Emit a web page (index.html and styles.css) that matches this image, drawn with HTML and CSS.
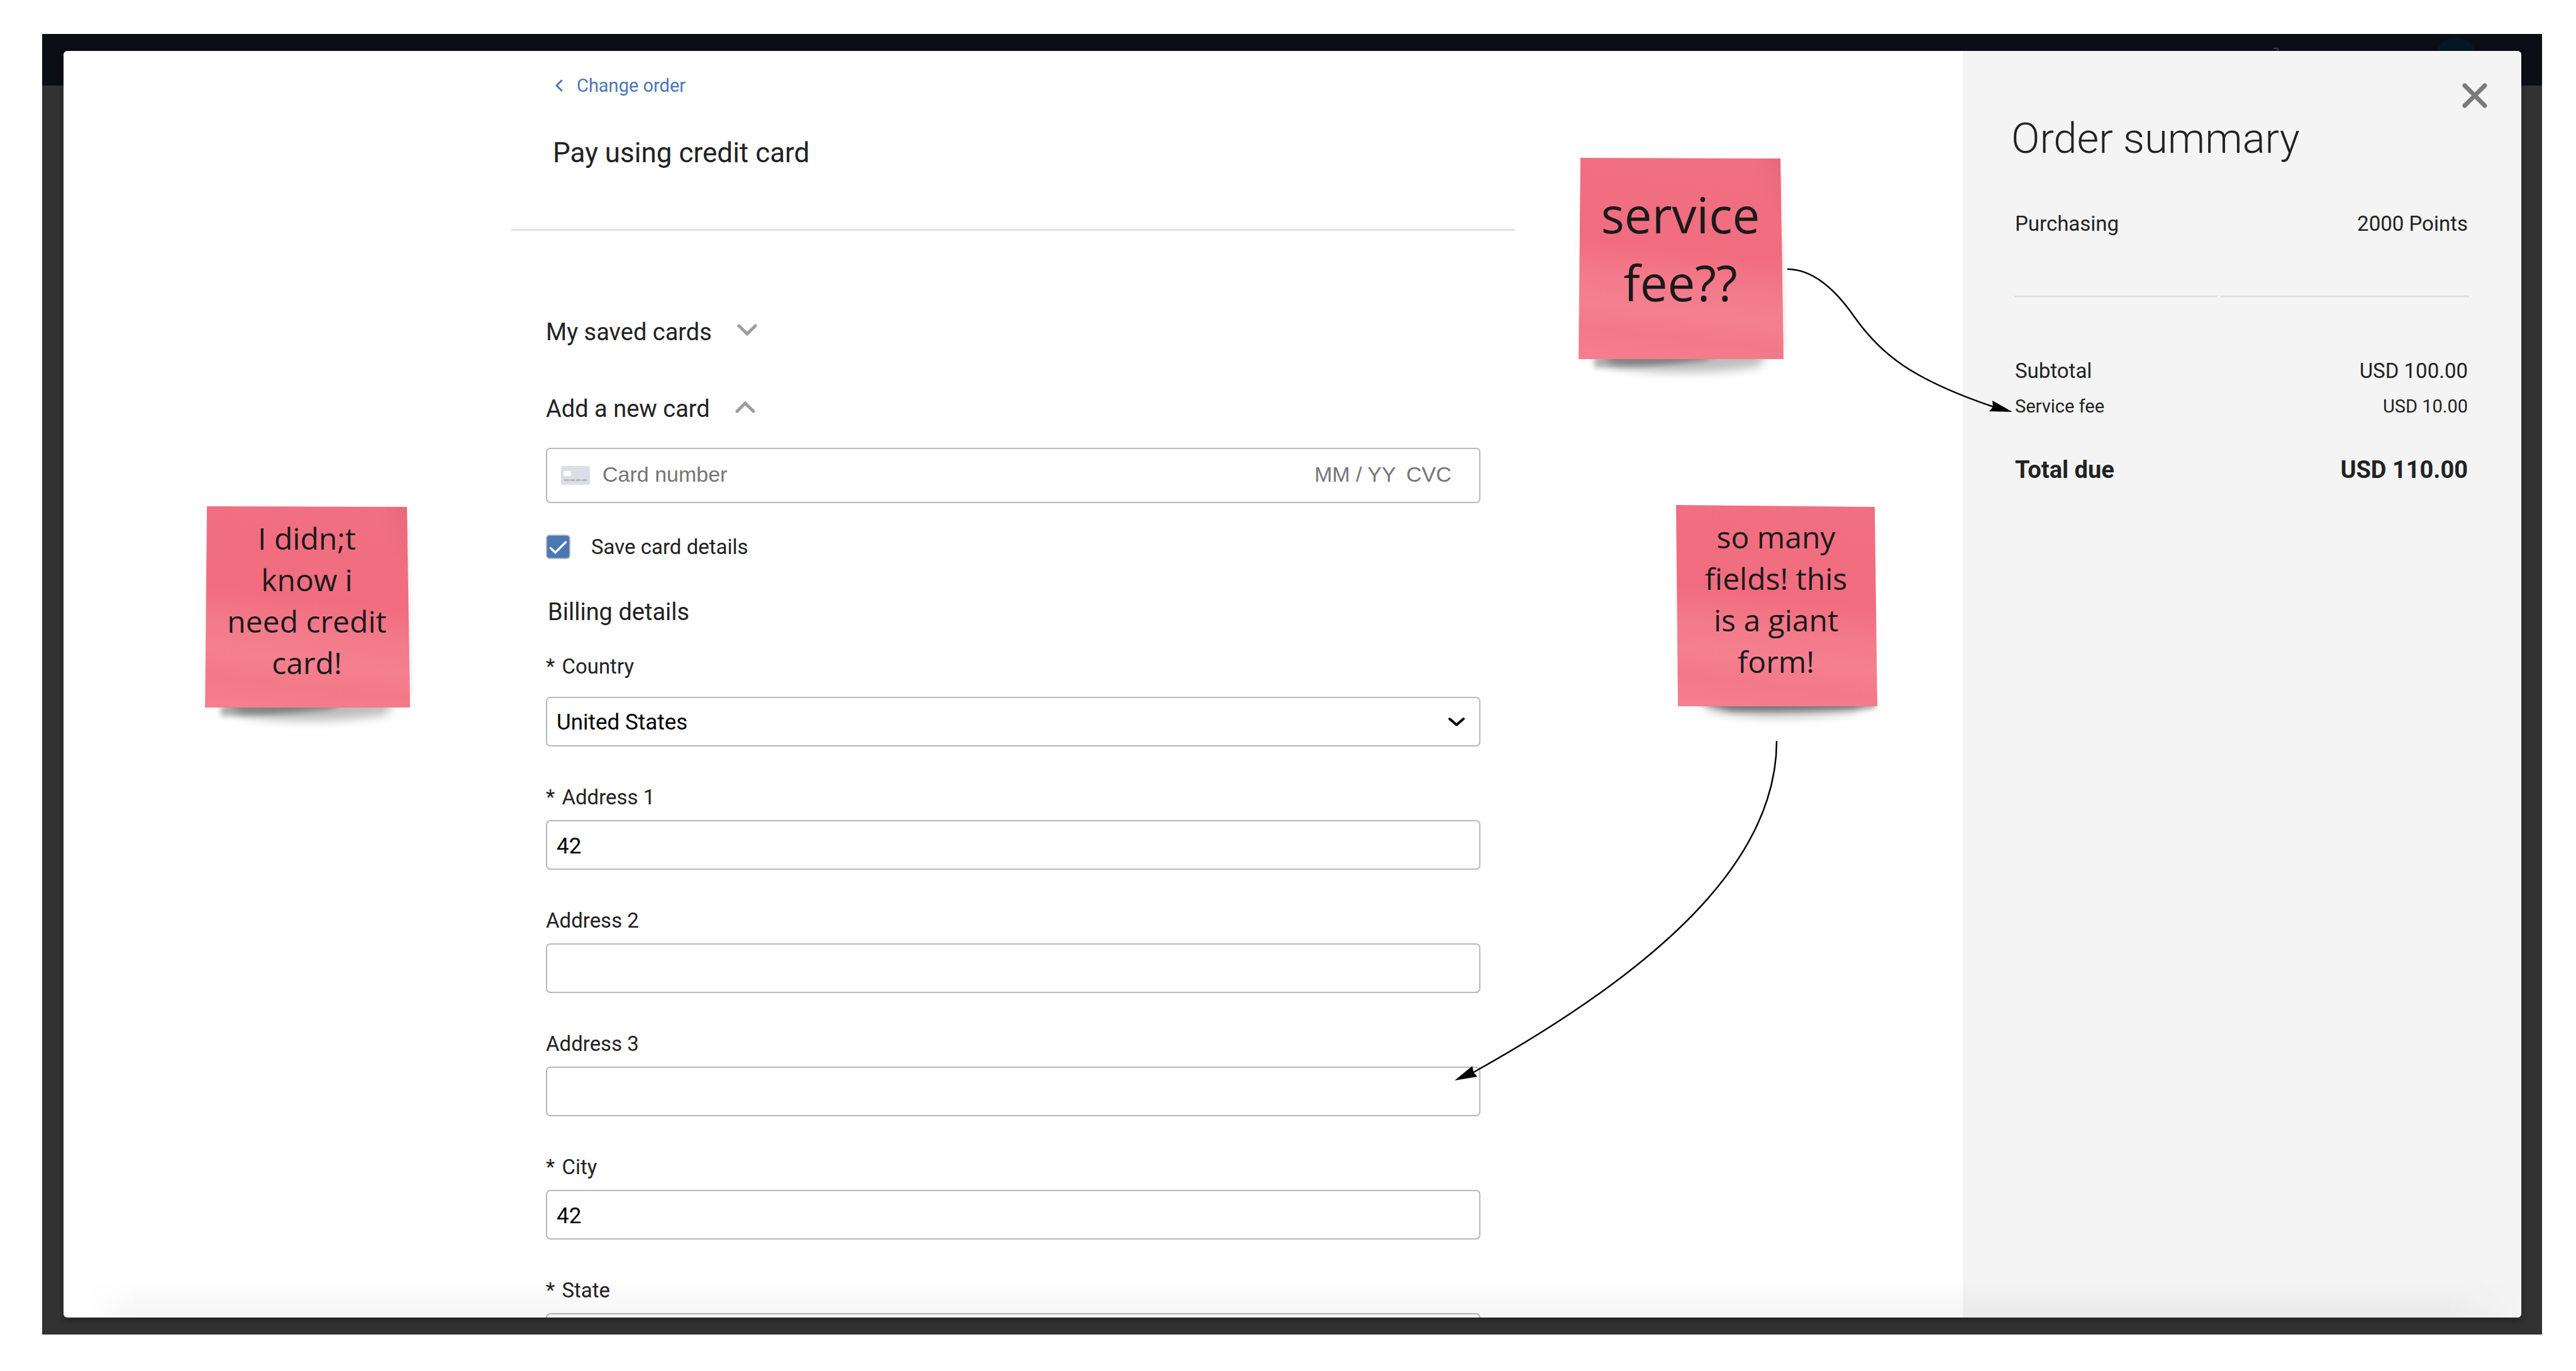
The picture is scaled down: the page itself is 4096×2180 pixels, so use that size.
FILE: index.html
```html
<!DOCTYPE html>
<html lang="en">
<head>
<meta charset="utf-8">
<meta name="viewport" content="width=device-width, initial-scale=1">
<title>Pay using credit card</title>
<link rel="stylesheet" href="styles.css">
</head>
<body>
<div class="frame">
  <header class="navbar">
    <svg class="navbar-mark" viewBox="0 0 8 20" aria-hidden="true"><path d="M0 1H7V8" fill="none" stroke="#3a3b3f" stroke-width="2"/></svg>
    <span class="avatar"></span>
  </header>

  <div class="dialog" role="dialog" aria-labelledby="pay-title">
    <main class="payment">
      <div class="payment-header">
        <a class="back-link" href="#order">
          <svg class="back-icon" viewBox="0 0 18 24" aria-hidden="true"><path d="M14 4L6 12L14 20" fill="none" stroke="#4a77b5" stroke-width="3" stroke-linecap="round" stroke-linejoin="round"/></svg>
          Change order
        </a>
        <h1 class="payment-title" id="pay-title">Pay using credit card</h1>
      </div>

      <form class="payment-form">
        <button class="toggle" type="button" aria-expanded="false">
          My saved cards
          <svg class="toggle-icon" viewBox="0 0 32 20" aria-hidden="true"><path d="M3 3L16 16L29 3" fill="none" stroke="#9c9c9c" stroke-width="5" stroke-linecap="round"/></svg>
        </button>
        <button class="toggle" type="button" aria-expanded="true">
          Add a new card
          <svg class="toggle-icon" viewBox="0 0 32 20" aria-hidden="true"><path d="M3 17L16 4L29 17" fill="none" stroke="#9c9c9c" stroke-width="5" stroke-linecap="round"/></svg>
        </button>

        <div class="card-box">
          <svg class="card-icon" viewBox="0 0 46 30" aria-hidden="true">
            <rect width="46" height="30" rx="4" fill="#dbdee6"/>
            <rect x="4" y="8" width="12" height="8" rx="1" fill="#fff"/>
            <path d="M6 22.500H11.500M15.500 22.500H21M25 22.500H30.500M34.500 22.500H40" stroke="#b4b8c5" stroke-width="3" stroke-linecap="round"/>
          </svg>
          <input class="card-input card-number" type="text" aria-label="Card number" placeholder="Card number">
          <input class="card-input card-expiry" type="text" aria-label="Expiry date" placeholder="MM / YY">
          <input class="card-input card-cvc" type="text" aria-label="CVC" placeholder="CVC">
        </div>

        <div class="save-row">
          <span class="checkbox">
            <input class="checkbox-input" type="checkbox" id="save-card" checked>
            <svg class="checkbox-mark" viewBox="0 0 39 39" aria-hidden="true"><path d="M7.500 21.500L15 28.500L31.500 12" fill="none" stroke="#fff" stroke-width="3.500" stroke-linecap="round"/></svg>
          </span>
          <label for="save-card">Save card details</label>
        </div>

        <h2 class="section-title">Billing details</h2>

        <div class="field field-country">
          <label class="field-label" for="country"><span class="required">*</span> Country</label>
          <div class="select-wrap">
            <select class="control" id="country"><option>United States</option></select>
            <svg class="select-icon" viewBox="0 0 28 18" aria-hidden="true"><path d="M3 4L14 13.500L25 4" fill="none" stroke="#000" stroke-width="4" stroke-linecap="round" stroke-linejoin="round"/></svg>
          </div>
        </div>
        <div class="field">
          <label class="field-label" for="address1"><span class="required">*</span> Address 1</label>
          <input class="control" type="text" id="address1" value="42">
        </div>
        <div class="field">
          <label class="field-label" for="address2">Address 2</label>
          <input class="control" type="text" id="address2">
        </div>
        <div class="field">
          <label class="field-label" for="address3">Address 3</label>
          <input class="control" type="text" id="address3">
        </div>
        <div class="field">
          <label class="field-label" for="city"><span class="required">*</span> City</label>
          <input class="control" type="text" id="city" value="42">
        </div>
        <div class="field">
          <label class="field-label" for="state"><span class="required">*</span> State</label>
          <input class="control" type="text" id="state">
        </div>
      </form>
    </main>

    <aside class="summary">
      <button class="close" type="button" aria-label="Close">
        <svg class="close-icon" viewBox="0 0 40 40" aria-hidden="true"><path d="M4 4L36 36M36 4L4 36" stroke="#7b7b7b" stroke-width="7" stroke-linecap="round"/></svg>
      </button>
      <h2 class="summary-title">Order summary</h2>
      <table class="totals">
        <tbody>
          <tr class="row-item"><th scope="row">Purchasing</th><td>2000 Points</td></tr>
          <tr class="row-subtotal"><th scope="row">Subtotal</th><td>USD 100.00</td></tr>
          <tr class="row-fee"><th scope="row">Service fee</th><td>USD 10.00</td></tr>
          <tr class="row-total"><th scope="row">Total due</th><td>USD 110.00</td></tr>
        </tbody>
      </table>
    </aside>
  </div>
</div>

<!-- Notes and arrows pinned on top of the screen -->
<svg class="arrows" aria-hidden="true">
  <g fill="none" stroke="#000" stroke-width="2.500">
    <path d="M2842 428C2885 428 2920 463 2948 503C2990 563 3040 603 3170 647"/>
    <path d="M2825 1178C2825 1340 2693 1510 2343 1705"/>
  </g>
  <path d="M3200 655L3168 637L3169 647L3163 654Z"/>
  <path d="M2313 1718L2341 1695L2343 1705L2349 1712Z"/>
</svg>

<div class="note note-fee">
  <svg class="note-paper" viewBox="0 0 326 320" aria-hidden="true">
    <defs>
      <linearGradient id="paper" x1="0.120" y1="0" x2="0" y2="1">
        <stop offset="0" stop-color="#f16f82"/>
        <stop offset="0.400" stop-color="#f16c7f"/>
        <stop offset="0.580" stop-color="#f37b8b"/>
        <stop offset="0.720" stop-color="#f47f8f"/>
        <stop offset="0.840" stop-color="#f37988"/>
        <stop offset="1" stop-color="#f47f90"/>
      </linearGradient>
      <linearGradient id="fold" x1="1" y1="0" x2="0.200" y2="0.500">
        <stop offset="0" stop-color="#e5677b"/>
        <stop offset="1" stop-color="#f06c7f" stop-opacity="0"/>
      </linearGradient>
      <filter id="soft" x="-20%" y="-100%" width="140%" height="300%"><feGaussianBlur stdDeviation="8"/></filter>
      <filter id="tight" x="-20%" y="-100%" width="140%" height="300%"><feGaussianBlur stdDeviation="4"/></filter>
    </defs>
    <path d="M34 300H308L286 332Q160 350 54 332Z" fill="#000" opacity="0.260" filter="url(#soft)"/>
    <path d="M25 300H250L200 322Q110 334 25 334Z" fill="#000" opacity="0.300" filter="url(#tight)"/>
    <path d="M312 20L322 30L328 300L312 316Z" fill="#000" opacity="0.100" filter="url(#tight)"/>
    <path d="M3 0L321 1L326 320L0 320Z" fill="url(#paper)"/>
    <path d="M321 1L322 92L268 50L288 1Z" fill="url(#fold)"/>
  </svg>
  <p class="note-text">service<br>fee??</p>
</div>

<div class="note note-know">
  <svg class="note-paper" viewBox="0 0 326 320" aria-hidden="true">
    <path d="M34 300H308L286 332Q160 350 54 332Z" fill="#000" opacity="0.260" filter="url(#soft)"/>
    <path d="M25 300H250L200 322Q110 334 25 334Z" fill="#000" opacity="0.300" filter="url(#tight)"/>
    <path d="M312 20L322 30L328 300L312 316Z" fill="#000" opacity="0.100" filter="url(#tight)"/>
    <path d="M3 0L321 1L326 320L0 320Z" fill="url(#paper)"/>
    <path d="M321 1L322 92L268 50L288 1Z" fill="url(#fold)"/>
  </svg>
  <p class="note-text">I didn;t<br>know i<br>need credit<br>card!</p>
</div>

<div class="note note-form">
  <svg class="note-paper" viewBox="0 0 326 320" aria-hidden="true">
    <path d="M30 300H312L290 328Q160 346 60 328Z" fill="#000" opacity="0.260" filter="url(#soft)"/>
    <path d="M20 310H322L318 324Q150 330 90 328Z" fill="#000" opacity="0.360" filter="url(#tight)"/>
    <path d="M3 0L319 3L323 320L6 320Z" fill="url(#paper)"/>
  </svg>
  <p class="note-text">so many<br>fields! this<br>is a giant<br>form!</p>
</div>
</body>
</html>
```
FILE: styles.css
```css
* {
  box-sizing: border-box;
}

body {
  position: relative;
  display: flex;
  height: 100vh;
  margin: 0;
  padding: 54px 54px 58px 67px;
  overflow: hidden;
  background: #fff;
  color: #222;
  font-family: Roboto, "Liberation Sans", sans-serif;
  font-size: 33px;
  line-height: 40px;
}

h1, h2, p {
  margin: 0;
  font-weight: 400;
}

svg {
  display: block;
  flex: none;
}

button, input, select {
  margin: 0;
  font: inherit;
  color: inherit;
}

/* Page behind the dialog */
.frame {
  display: grid;
  flex: 1;
  min-height: 0;
  grid-template: minmax(0, 1fr) / minmax(0, 1fr);
  background: #323232;
}

.navbar {
  display: flex;
  grid-area: 1 / 1;
  align-self: start;
  justify-content: flex-end;
  gap: 249px;
  height: 82px;
  padding: 5px 104px 0 0;
  background: #0b0e15;
}

.navbar-mark {
  width: 8px;
  height: 20px;
  margin-top: 17px;
}

.avatar {
  width: 66px;
  height: 66px;
  border-radius: 50%;
  background: #051627;
}

/* Dialog */
.dialog {
  position: relative;
  display: flex;
  grid-area: 1 / 1;
  margin: 27px 33px 27px 34px;
  overflow: hidden;
  border-radius: 6px;
  background: #fff;
  box-shadow: 0 6px 12px rgba(0, 0, 0, 0.3);
}

.dialog::after {
  position: absolute;
  right: 0;
  bottom: 0;
  left: 0;
  height: 64px;
  background: linear-gradient(transparent, rgba(0, 0, 0, 0.04));
  -webkit-mask-image: linear-gradient(90deg, transparent 30px, #000 120px, #000 calc(100% - 120px), transparent);
  mask-image: linear-gradient(90deg, transparent 30px, #000 120px, #000 calc(100% - 120px), transparent);
  content: "";
  pointer-events: none;
}

.payment {
  flex: 1;
  padding-top: 35px;
}

.payment-header,
.payment-form {
  max-width: 1596px;
  margin: 0 auto;
}

.payment-header {
  display: flex;
  flex-direction: column;
  align-items: flex-start;
  padding: 0 66px 93px;
  border-bottom: 3px solid #e2e2e2;
}

.back-link {
  display: flex;
  align-items: center;
  gap: 20px;
  color: #4a77b5;
  font-size: 29px;
  text-decoration: none;
}

.back-icon {
  width: 18px;
  height: 24px;
}

.payment-title {
  margin-top: 59px;
  font-size: 44px;
  line-height: 56px;
}

.payment-form {
  padding: 137px 55px 0;
}

.toggle {
  display: flex;
  align-items: center;
  gap: 40px;
  margin-bottom: 74px;
  padding: 0;
  border: 0;
  background: none;
  font-size: 38px;
  line-height: 48px;
}

.toggle + .card-box {
  margin-top: -36px;
}

.toggle-icon {
  width: 32px;
  height: 20px;
  margin-bottom: 6px;
}

.card-box {
  display: flex;
  align-items: center;
  height: 88px;
  padding: 0 40px 0 22px;
  border: 2px solid #b8b8b8;
  border-radius: 7px;
}

.card-icon {
  width: 46px;
  height: 30px;
  margin-right: 20px;
}

.card-input {
  height: 44px;
  padding: 0 0 4px;
  border: 0;
  outline: 0;
  background: none;
  font-family: "Liberation Sans", sans-serif;
  font-size: 34px;
}

.card-input::placeholder {
  color: #757575;
  opacity: 1;
}

.card-number {
  flex: 1;
  min-width: 0;
}

.card-expiry {
  width: 134px;
  margin-right: 12px;
}

.card-cvc {
  width: 76px;
}

.save-row {
  display: flex;
  align-items: center;
  gap: 33px;
  margin-top: 50px;
  line-height: 39px;
}

.checkbox {
  display: grid;
  width: 39px;
  height: 39px;
}

.checkbox-input {
  grid-area: 1 / 1;
  width: 39px;
  height: 39px;
  border: 2px solid #b4b8bd;
  border-radius: 6px;
  background: #4a77b5;
  -webkit-appearance: none;
  appearance: none;
}

.checkbox-mark {
  grid-area: 1 / 1;
  pointer-events: none;
}

.section-title {
  margin-top: 60px;
  padding-left: 3px;
  font-size: 38px;
  line-height: 48px;
}

.field {
  display: flex;
  flex-direction: column;
  gap: 16px;
  margin-top: 61px;
}

.field-country {
  gap: 28px;
  margin-top: 43px;
}

.required {
  margin-right: 3px;
}

.control {
  width: 100%;
  height: 79px;
  padding: 3px 15px 0;
  border: 2px solid #b8b8b8;
  border-radius: 7px;
  outline: 0;
  background: #fff;
  color: #000;
  font-size: 35px;
  -webkit-appearance: none;
  appearance: none;
}

.select-wrap {
  display: grid;
  align-items: center;
}

.select-wrap > * {
  grid-area: 1 / 1;
}

.select-icon {
  justify-self: end;
  width: 28px;
  height: 18px;
  margin-right: 24px;
  pointer-events: none;
}

/* Order summary */
.summary {
  flex: 0 0 888px;
  padding: 43px 83px 0 77px;
  background: #f4f4f4;
}

.close {
  display: grid;
  place-items: center;
  width: 56px;
  height: 56px;
  margin: 0 -37px 0 auto;
  padding: 0;
  border: 0;
  background: none;
}

.close-icon {
  width: 40px;
  height: 40px;
}

.summary-title {
  font-size: 67px;
  font-weight: 300;
  line-height: 80px;
}

.totals {
  width: calc(100% + 5px);
  margin: 76px -5px 0 0;
  border-spacing: 5px 0;
  table-layout: fixed;
}

.totals th,
.totals td {
  padding: 0;
  font-weight: 400;
  text-align: left;
}

.totals th {
  width: 45%;
  padding-left: 1px;
}

.totals td {
  padding-right: 2px;
  text-align: right;
}

.totals .row-item > * {
  padding-bottom: 94px;
  border-bottom: 3px solid #e0e0e0;
}

.totals .row-subtotal > * {
  padding-top: 97px;
}

.totals .row-fee > * {
  padding-top: 16px;
  font-size: 29px;
}

.totals .row-total > * {
  padding-top: 57px;
  font-size: 38px;
  font-weight: 700;
  line-height: 48px;
}

/* Notes and arrows */
.arrows {
  position: absolute;
  top: 0;
  left: 0;
  width: 100%;
  height: 100%;
  pointer-events: none;
}

.note {
  position: absolute;
  display: grid;
  place-items: center;
  width: 326px;
  height: 320px;
  color: #1a1a1a;
  font-family: "Open Sans", "Noto Sans", sans-serif;
  font-size: 48px;
  line-height: 66px;
  text-align: center;
}

.note-paper {
  grid-area: 1 / 1;
  width: 326px;
  height: 320px;
  overflow: visible;
}

.note-text {
  position: relative;
  grid-area: 1 / 1;
  padding: 0 2px 20px 0;
}

.note-fee {
  top: 251px;
  left: 2510px;
  font-size: 78px;
  line-height: 108px;
}

.note-fee .note-text {
  padding-bottom: 32px;
}

.note-know {
  top: 805px;
  left: 326px;
}

.note-form {
  top: 803px;
  left: 2662px;
}
```
